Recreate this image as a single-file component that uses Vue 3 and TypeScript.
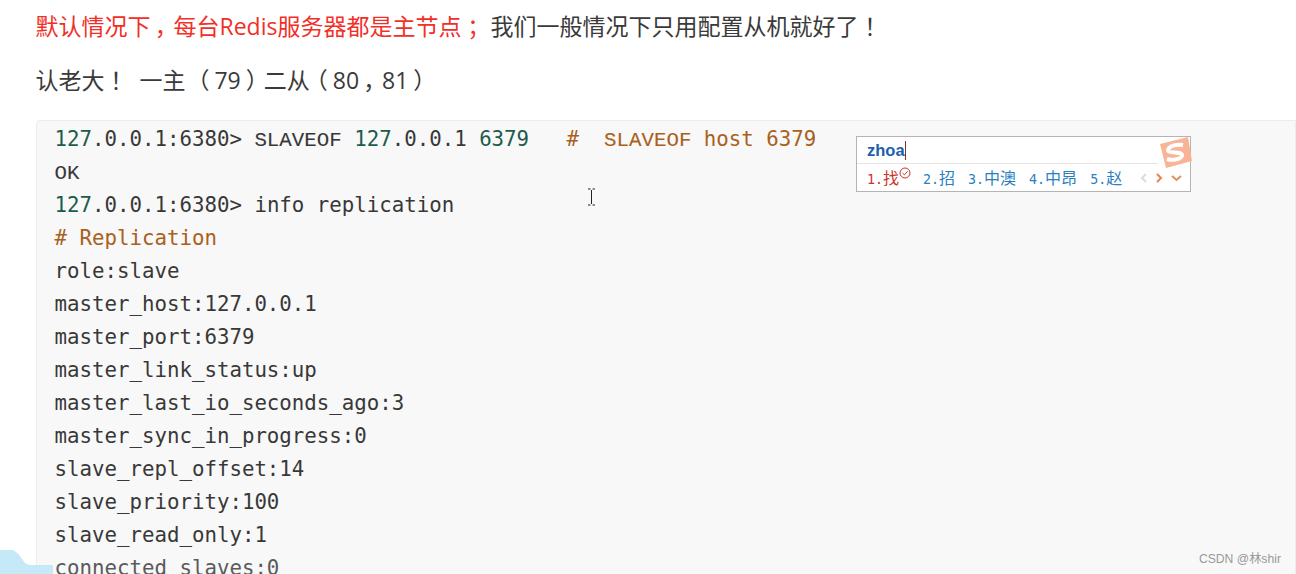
<script setup lang="ts">
type Seg = { t: string; c?: string }
const lines: Seg[][] = [
  [{ t: '127', c: 'num' }, { t: '.0.0.1:6380> ' }, { t: 'SLAVEOF', c: 'caps' }, { t: ' ' }, { t: '127', c: 'num' }, { t: '.0.0.1 ' }, { t: '6379', c: 'num' }, { t: '   #  ', c: 'cm' }, { t: 'SLAVEOF', c: 'cm caps' }, { t: ' host 6379', c: 'cm' }],
  [{ t: 'OK', c: 'caps' }],
  [{ t: '127', c: 'num' }, { t: '.0.0.1:6380> info replication' }],
  [{ t: '# Replication', c: 'cm' }],
  [{ t: 'role:slave' }],
  [{ t: 'master_host:127.0.0.1' }],
  [{ t: 'master_port:6379' }],
  [{ t: 'master_link_status:up' }],
  [{ t: 'master_last_io_seconds_ago:3' }],
  [{ t: 'master_sync_in_progress:0' }],
  [{ t: 'slave_repl_offset:14' }],
  [{ t: 'slave_priority:100' }],
  [{ t: 'slave_read_only:1' }],
  [{ t: 'connected_slaves:0', c: 'fade' }]
]
const cands = [
  { n: '2.', w: '招' },
  { n: '3.', w: '中澳' },
  { n: '4.', w: '中昂' },
  { n: '5.', w: '赵' }
]
</script>

<template>
  <div class="page">
    <p class="p1"><span class="red">默认情况下<span class="pu">，</span>每台Redis服务器都是主节点<span class="pu">；</span></span> 我们一般情况下只用配置从机就好了<span class="pu">！</span></p>
    <p class="p2">认老大<span class="pu">！</span>{{ '  ' }}一主 <span class="pu">（</span>79<span class="pu">）</span>二从<span class="pu">（</span>80<span class="pu">，</span>81<span class="pu">）</span></p>
    <div class="code">
      <div v-for="(l, i) in lines" :key="i" class="line"><span v-for="(s, j) in l" :key="j" :class="s.c">{{ s.t }}</span></div>
    </div>

    <svg class="blob" width="56" height="24" viewBox="0 0 56 24">
      <path d="M0 0 L12 0 C17 1 20 6 25 13 C27 15 30 15 35 15 L53 15 L53 24 L0 24 Z" fill="#c5e9f6" />
    </svg>

    <svg class="cursor" width="9" height="18" viewBox="0 0 9 18">
      <path d="M1 1H3.500M5.500 1H8M4.500 2V16M1 17H3.500M5.500 17H8" stroke="#222" stroke-width="1" fill="none" />
    </svg>

    <div class="ime">
      <div class="ime-top"><span class="pinyin">zhoa</span><span class="caret"></span></div>
      <div class="ime-row">
        <span class="c first"><span class="n">1.</span>找<svg class="ok" width="12" height="12" viewBox="0 0 12 12"><circle cx="6" cy="6" r="5" fill="none" stroke="#c8352b" stroke-width="1" /><path d="M3.500 6L5.400 7.800L8.600 4.300" fill="none" stroke="#c8352b" stroke-width="1" /></svg></span>
        <span v-for="c in cands" :key="c.n" class="c"><span class="n">{{ c.n }}</span>{{ c.w }}</span>
        <svg class="nav" width="60" height="12" viewBox="0 0 60 12">
          <path d="M7 2L3 6L7 10" fill="none" stroke="#dcdcdc" stroke-width="2" />
          <path d="M18 2L22 6L18 10" fill="none" stroke="#e8854a" stroke-width="2" />
          <path d="M33 4L37.500 8L42 4" fill="none" stroke="#d9925e" stroke-width="2" />
        </svg>
      </div>
      <svg class="logo" width="34" height="32" viewBox="0 0 34 32">
        <path d="M2 7 L30 0 L34 24 L8 31 Z" fill="#f8b496" />
        <path d="M25 8 C18 7 11 9 10 13 C10 17 24 14 24 18 C24 22 15 24 9 22" fill="none" stroke="#fff" stroke-width="4" />
      </svg>
    </div>

    <div class="mark">CSDN @林shir</div>
  </div>
</template>

<style>
html, body { margin: 0; padding: 0; background: #fff; overflow: hidden; }
</style>

<style scoped>
.page {
  position: relative;
  width: 1296px;
  height: 574px;
  overflow: hidden;
  background: #fff;
  font-family: "Open Sans", "Noto Sans CJK SC", sans-serif;
  font-size: 23px;
  color: #3a3a3a;
  box-sizing: border-box;
  padding: 9px 0 0 35.500px;
}
.p1, .p2 { margin: 0; height: 34px; line-height: 34px; white-space: pre; }
.p2 { margin-top: 20px; }
.pu {
  display: inline-block;
  width: 23px;
  text-align: center;
  font-feature-settings: "palt";
}
.red { color: #f22f27; }
.code {
  margin-top: 23px;
  background: #f8f8f8;
  border: 1px solid #ececec;
  border-radius: 4px 0 0 0;
  padding: 2px 0 0 18px;
  height: 500px;
  font-family: "DejaVu Sans Mono", monospace;
  font-size: 20.750px;
  color: #383838;
}
.line { height: 33px; line-height: 33px; white-space: pre; }
.caps { font-family: "Liberation Mono", monospace; font-size: 20.790px; -webkit-text-stroke: 0.1px currentColor; }
.num { color: #1c5c4c; }
.cm { color: #a8611c; }
.fade { color: #5a5a5a; }
.blob { position: absolute; left: 0; bottom: 0; }
.cursor { position: absolute; left: 587px; top: 188px; }
.ime {
  position: absolute;
  left: 856px;
  top: 136px;
  width: 333px;
  height: 54px;
  background: #fff;
  border: 1px solid #b4b4b4;
  font-family: "Noto Sans CJK SC", sans-serif;
}
.ime-top {
  height: 26px;
  margin: 0 32px 0 0;
  border-bottom: 1px solid #e4e4e4;
  display: flex;
  align-items: center;
  padding-left: 10px;
}
.pinyin {
  font-family: "Liberation Sans", sans-serif;
  font-weight: 700;
  font-size: 16.500px;
  color: #1c5fae;
}
.caret { width: 1px; height: 19px; background: #8a2a2a; }
.ime-row {
  display: flex;
  align-items: center;
  height: 26px;
  padding-left: 10px;
  font-size: 16px;
  color: #2b7fc1;
  white-space: nowrap;
}
.n { font-family: "DejaVu Sans Mono", monospace; font-size: 13.300px; }
.c { margin-right: 13px; display: inline-flex; align-items: baseline; }
.first { color: #c8352b; margin-right: 12px; }
.ok { align-self: flex-start; margin-top: 2px; }
.nav { position: absolute; left: 282px; top: 35px; }
.logo { position: absolute; right: -2px; top: 0; }
.mark {
  position: absolute;
  right: 15px;
  bottom: 7px;
  font-family: "Liberation Sans", "Noto Sans CJK SC", sans-serif;
  font-size: 12.200px;
  color: #999;
}
</style>
